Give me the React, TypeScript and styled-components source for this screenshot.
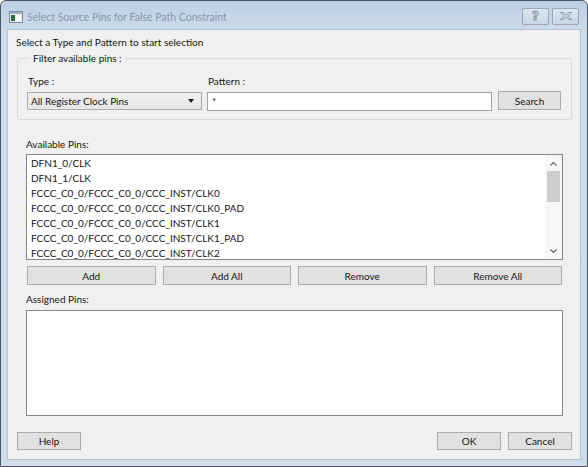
import React from 'react';
import styled, { createGlobalStyle } from 'styled-components';

const GlobalStyle = createGlobalStyle`
  html, body {
    margin: 0;
    padding: 0;
    background: #ffffff;
  }
  body {
    font-family: Lato, 'Liberation Sans', sans-serif;
    font-size: 10px;
    color: #161616;
  }
  * {
    box-sizing: border-box;
  }
`;

const availablePins = [
  'DFN1_0/CLK',
  'DFN1_1/CLK',
  'FCCC_C0_0/FCCC_C0_0/CCC_INST/CLK0',
  'FCCC_C0_0/FCCC_C0_0/CCC_INST/CLK0_PAD',
  'FCCC_C0_0/FCCC_C0_0/CCC_INST/CLK1',
  'FCCC_C0_0/FCCC_C0_0/CCC_INST/CLK1_PAD',
  'FCCC_C0_0/FCCC_C0_0/CCC_INST/CLK2',
];

const App: React.FC = () => {
  return (
    <>
      <GlobalStyle />
      <Window>
        <TitleBar>
          <AppIcon width="14" height="12" viewBox="0 0 14 12">
            <rect x="0.5" y="0.5" width="13" height="11" fill="#e8eef4" stroke="#7d8d9c" />
            <rect x="1" y="1" width="12" height="2" fill="#9fb2c4" />
            <rect x="2" y="4" width="4" height="6" fill="#2f6b46" />
            <rect x="7" y="4" width="5" height="6" fill="#ffffff" />
          </AppIcon>
          <Title>Select Source Pins for False Path Constraint</Title>
          <CaptionButtons>
            <CaptionButton>
              <HelpGlyph>?</HelpGlyph>
            </CaptionButton>
            <CaptionButton>
              <svg width="14" height="10" viewBox="0 0 14 10">
                <path
                  d="M1.5 1.5 H4.5 L7 4 L9.5 1.5 H12.5 L8.5 5 L12.5 8.5 H9.5 L7 6 L4.5 8.5 H1.5 L5.5 5 Z"
                  fill="none"
                  stroke="#8c98a4"
                  strokeWidth="1"
                />
              </svg>
            </CaptionButton>
          </CaptionButtons>
        </TitleBar>

        <Client>
          <Heading>Select a Type and Pattern to start selection</Heading>

          <GroupBox>
            <Legend>Filter available pins :</Legend>
            <FilterGrid>
              <FieldLabel>Type :</FieldLabel>
              <FieldLabel>Pattern :</FieldLabel>
              <span />
              <Select>
                All Register Clock Pins
                <SelectArrow />
              </Select>
              <TextInput>*</TextInput>
              <Button $height={19} $raise>
                Search
              </Button>
            </FilterGrid>
          </GroupBox>

          <Section>
            <SectionLabel>Available Pins:</SectionLabel>
            <ListBox>
              <ListItems>
                {availablePins.map((pin) => (
                  <ListItem key={pin}>{pin}</ListItem>
                ))}
              </ListItems>
              <ScrollBar>
                <svg width="9" height="6" viewBox="0 0 9 6">
                  <path d="M1.5 4.5 L4.5 1.5 L7.5 4.5" fill="none" stroke="#606060" strokeWidth="1.1" />
                </svg>
                <ScrollTrack>
                  <Thumb />
                </ScrollTrack>
                <svg width="9" height="6" viewBox="0 0 9 6">
                  <path d="M1.5 1.5 L4.5 4.5 L7.5 1.5" fill="none" stroke="#606060" strokeWidth="1.1" />
                </svg>
              </ScrollBar>
            </ListBox>

            <ActionRow>
              <Button>Add</Button>
              <Button>Add All</Button>
              <Button>Remove</Button>
              <Button>Remove All</Button>
            </ActionRow>

            <SectionLabel $top={7}>Assigned Pins:</SectionLabel>
            <ListBox />
          </Section>

          <Footer>
            <Button $width={64}>Help</Button>
            <FooterRight>
              <Button $width={64}>OK</Button>
              <Button $width={64}>Cancel</Button>
            </FooterRight>
          </Footer>
        </Client>
      </Window>
    </>
  );
};

const Window = styled.div`
  width: 588px;
  height: 467px;
  display: flex;
  flex-direction: column;
  padding: 0 6px 6px 6px;
  border: 1px solid #4b5661;
  border-radius: 6px 6px 0 0;
  background: linear-gradient(180deg, #bccfe3 0px, #cddbea 30px, #cfdcea 100%);
`;

const TitleBar = styled.div`
  height: 28px;
  display: flex;
  align-items: center;
  padding: 0 0 0 2px;
`;

const AppIcon = styled.svg`
  flex: none;
  margin-top: 4px;
`;

const Title = styled.div`
  margin: 3px 0 0 4px;
  font-size: 10.5px;
  color: #8799ac;
  white-space: nowrap;
`;

const CaptionButtons = styled.div`
  display: flex;
  gap: 3px;
  margin: 2px 2px 0 auto;
`;

const CaptionButton = styled.div`
  width: 27px;
  height: 17px;
  display: flex;
  align-items: center;
  justify-content: center;
  border: 1px solid #9aa7b4;
  border-radius: 2px;
  background: linear-gradient(180deg, #dce6f0, #c7d6e5);
`;

const HelpGlyph = styled.span`
  font-family: 'DejaVu Sans', sans-serif;
  font-size: 12px;
  font-weight: bold;
  line-height: 1;
  color: transparent;
  -webkit-text-stroke: 0.8px #7f8b97;
`;

const Client = styled.div`
  flex: 1;
  display: flex;
  flex-direction: column;
  padding: 5px 8px 9px 8px;
  background: #f0f0f0;
  border: 1px solid #b3c2d1;
`;

const Heading = styled.div`
  height: 15px;
  line-height: 15px;
`;

const GroupBox = styled.fieldset`
  margin: 1px 0 0 1px;
  padding: 8px 8px 8px 9px;
  border: 1px solid #dadada;
  border-radius: 2px;
  min-width: 0;
`;

const Legend = styled.legend`
  margin-left: 3px;
  padding: 0 3px;
  height: 15px;
  line-height: 15px;
`;

const FilterGrid = styled.div`
  display: grid;
  grid-template-columns: 175px 285px 64px;
  grid-template-rows: 15px 19px;
  column-gap: 5px;
  row-gap: 3px;
  & > :nth-child(3n) {
    margin-left: 1px;
  }
`;

const FieldLabel = styled.div`
  line-height: 15px;
  padding-left: 1px;
`;

const Select = styled.div`
  position: relative;
  height: 18px;
  line-height: 16px;
  padding-left: 3px;
  border: 1px solid #acacac;
  background: linear-gradient(180deg, #f0f0f0, #e5e5e5);
`;

const SelectArrow = styled.span`
  position: absolute;
  right: 7px;
  top: 6px;
  width: 0;
  height: 0;
  border-left: 3.5px solid transparent;
  border-right: 3.5px solid transparent;
  border-top: 4px solid #1e1e1e;
`;

const TextInput = styled.div`
  height: 19px;
  line-height: 17px;
  padding-left: 4px;
  border: 1px solid #a3a3a3;
  background: #ffffff;
`;

const Button = styled.div<{ $width?: number; $height?: number; $raise?: boolean }>`
  width: ${(p) => (p.$width ? `${p.$width}px` : 'auto')};
  height: ${(p) => p.$height ?? 19}px;
  margin-top: ${(p) => (p.$raise ? '-1px' : '0')};
  display: flex;
  align-items: center;
  justify-content: center;
  border: 1px solid #adadad;
  background: #e1e1e1;
  color: #161616;
`;

const Section = styled.div`
  display: flex;
  flex-direction: column;
  margin: 0 9px 0 10px;
`;

const SectionLabel = styled.div<{ $top?: number }>`
  margin-top: ${(p) => p.$top ?? 17}px;
  margin-bottom: ${(p) => (p.$top ? 3 : 2)}px;
  height: 15px;
  line-height: 15px;
`;

const ListBox = styled.div`
  height: 106px;
  display: flex;
  border: 1px solid #828790;
  background: #ffffff;
  overflow: hidden;
`;

const ListItems = styled.div`
  flex: 1;
  padding: 1px 0 0 4px;
`;

const ListItem = styled.div`
  height: 15px;
  line-height: 15px;
  white-space: nowrap;
`;

const ScrollBar = styled.div`
  width: 17px;
  display: flex;
  flex-direction: column;
  align-items: center;
  padding: 6px 0 5px;
  background: #f7f7f7;
`;

const ScrollTrack = styled.div`
  flex: 1;
  width: 100%;
  padding: 4px 2px 0;
`;

const Thumb = styled.div`
  height: 31px;
  background: #cdcdcd;
`;

const ActionRow = styled.div`
  display: grid;
  grid-template-columns: repeat(4, 1fr);
  column-gap: 7px;
  margin: 6px 1px 0;
`;

const Footer = styled.div`
  margin: auto 0 0 1px;
  display: flex;
  justify-content: space-between;
  & ${Button} {
    height: 18px;
  }
`;

const FooterRight = styled.div`
  display: flex;
  gap: 7px;
`;

export default App;
